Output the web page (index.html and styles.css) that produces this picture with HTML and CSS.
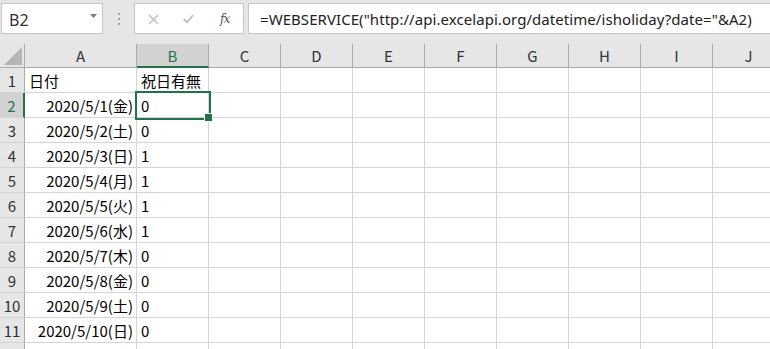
FILE: index.html
```html
<!DOCTYPE html>
<html lang="ja">
<head>
<meta charset="utf-8">
<link rel="stylesheet" href="styles.css">
</head>
<body>
<div class="app">
  <div class="toolbar">
    <div class="namebox">
      <span class="name">B2</span>
      <svg class="caret" width="7" height="4" viewBox="0 0 7 4"><path d="M0 0H7L3.5 4Z" fill="#7a7a7a"/></svg>
    </div>
    <div class="dots"><i></i><i></i><i></i></div>
    <div class="fxbox">
      <svg class="btn-x" width="11" height="11" viewBox="0 0 11 11"><path d="M1 1L10 10M10 1L1 10" stroke="#bdbdbd" stroke-width="1.4" fill="none"/></svg>
      <svg class="btn-ok" width="11" height="10" viewBox="0 0 11 10"><path d="M0.8 5.2L4 8.4L10.2 1" stroke="#bdbdbd" stroke-width="1.8" fill="none"/></svg>
      <span class="fx">fx</span>
    </div>
    <div class="formula">=WEBSERVICE("http://api.excelapi.org/datetime/isholiday?date="&amp;A2)</div>
  </div>
  <div class="sheet">
    <div class="corner"><svg width="18" height="18" viewBox="0 0 18 18"><path d="M18 0V18H0Z" fill="#b6b6b6"/></svg></div>
    <div class="ch">A</div><div class="ch on">B</div><div class="ch">C</div><div class="ch">D</div><div class="ch">E</div><div class="ch">F</div><div class="ch">G</div><div class="ch">H</div><div class="ch">I</div><div class="ch">J</div>

    <div class="rh">1</div><div class="c">日付</div><div class="c">祝日有無</div><div class="c"></div><div class="c"></div><div class="c"></div><div class="c"></div><div class="c"></div><div class="c"></div><div class="c"></div><div class="c"></div>
    <div class="rh on">2</div><div class="c r">2020/5/1(金)</div><div class="c sel">0</div><div class="c"></div><div class="c"></div><div class="c"></div><div class="c"></div><div class="c"></div><div class="c"></div><div class="c"></div><div class="c"></div>
    <div class="rh">3</div><div class="c r">2020/5/2(土)</div><div class="c">0</div><div class="c"></div><div class="c"></div><div class="c"></div><div class="c"></div><div class="c"></div><div class="c"></div><div class="c"></div><div class="c"></div>
    <div class="rh">4</div><div class="c r">2020/5/3(日)</div><div class="c">1</div><div class="c"></div><div class="c"></div><div class="c"></div><div class="c"></div><div class="c"></div><div class="c"></div><div class="c"></div><div class="c"></div>
    <div class="rh">5</div><div class="c r">2020/5/4(月)</div><div class="c">1</div><div class="c"></div><div class="c"></div><div class="c"></div><div class="c"></div><div class="c"></div><div class="c"></div><div class="c"></div><div class="c"></div>
    <div class="rh">6</div><div class="c r">2020/5/5(火)</div><div class="c">1</div><div class="c"></div><div class="c"></div><div class="c"></div><div class="c"></div><div class="c"></div><div class="c"></div><div class="c"></div><div class="c"></div>
    <div class="rh">7</div><div class="c r">2020/5/6(水)</div><div class="c">1</div><div class="c"></div><div class="c"></div><div class="c"></div><div class="c"></div><div class="c"></div><div class="c"></div><div class="c"></div><div class="c"></div>
    <div class="rh">8</div><div class="c r">2020/5/7(木)</div><div class="c">0</div><div class="c"></div><div class="c"></div><div class="c"></div><div class="c"></div><div class="c"></div><div class="c"></div><div class="c"></div><div class="c"></div>
    <div class="rh">9</div><div class="c r">2020/5/8(金)</div><div class="c">0</div><div class="c"></div><div class="c"></div><div class="c"></div><div class="c"></div><div class="c"></div><div class="c"></div><div class="c"></div><div class="c"></div>
    <div class="rh">10</div><div class="c r">2020/5/9(土)</div><div class="c">0</div><div class="c"></div><div class="c"></div><div class="c"></div><div class="c"></div><div class="c"></div><div class="c"></div><div class="c"></div><div class="c"></div>
    <div class="rh">11</div><div class="c r">2020/5/10(日)</div><div class="c">0</div><div class="c"></div><div class="c"></div><div class="c"></div><div class="c"></div><div class="c"></div><div class="c"></div><div class="c"></div><div class="c"></div>
    <div class="rh"></div><div class="c"></div><div class="c"></div><div class="c"></div><div class="c"></div><div class="c"></div><div class="c"></div><div class="c"></div><div class="c"></div><div class="c"></div><div class="c"></div>
  </div>
</div>
</body>
</html>
```

FILE: styles.css
```css
* { box-sizing: border-box; }
html, body { margin: 0; padding: 0; }
body {
  width: 770px;
  height: 349px;
  overflow: hidden;
  background: #fff;
  font-family: "Noto Sans CJK JP", "Noto Sans", sans-serif;
  color: #000;
}
.app { width: 770px; }

.toolbar {
  height: 44px;
  background: #e6e6e6;
  display: flex;
  align-items: flex-start;
  padding: 3px 0 0 1px;
}
.namebox {
  width: 102px;
  height: 31px;
  background: #fff;
  border: 1px solid #c6c6c6;
  display: flex;
  align-items: center;
  padding: 0 0 0 7px;
  font-family: "Noto Sans", sans-serif;
  font-size: 16px;
  color: #333;
}
.name { flex: 1; padding-top: 3px; }
.caret { margin: 0 5px 6px 0; }
.dots {
  margin: 10px 0 0 15px;
  display: flex;
  flex-direction: column;
  gap: 3px;
}
.dots i { display: block; width: 2px; height: 2px; background: #a0a0a0; }
.fxbox {
  margin-left: 14px;
  width: 110px;
  height: 31px;
  background: #fff;
  border: 1px solid #c6c6c6;
  display: flex;
  align-items: center;
  padding-left: 13px;
}
.btn-x { margin-top: 1px; }
.btn-ok { margin-left: 24px; margin-top: 1px; }
.fx {
  margin-left: 26px;
  font-family: "DejaVu Serif", "Liberation Serif", serif;
  font-style: italic;
  font-size: 12px;
  color: #555;
  letter-spacing: -1px;
}
.formula {
  margin-left: 4px;
  flex: 1;
  margin-right: -4px;
  height: 31px;
  background: #fff;
  border: 1px solid #c6c6c6;
  padding: 4px 0 0 11px;
  font-family: "Noto Sans", sans-serif;
  font-size: 15px;
  letter-spacing: 0.06px;
  line-height: 22px;
  color: #222;
  white-space: nowrap;
  overflow: hidden;
}

.sheet {
  display: grid;
  grid-template-columns: 25px 112px repeat(9, 72px);
  grid-template-rows: 24px repeat(12, 25px);
  background: #e6e6e6;
}
.corner {
  background: #e6e6e6;
  border-right: 1px solid #ababab;
  border-bottom: 1px solid #ababab;
  display: flex;
  align-items: flex-end;
  justify-content: flex-end;
  padding: 0 2px 2px 0;
}
.ch {
  background: #e6e6e6;
  border-right: 1px solid #ababab;
  border-bottom: 1px solid #ababab;
  display: flex;
  align-items: center;
  justify-content: center;
  font-size: 15px;
  color: #333;
}
.ch.on {
  background: #d2d2d2;
  border-bottom: 2px solid #217346;
  color: #217346;
}
.rh {
  background: #e6e6e6;
  border-right: 1px solid #ababab;
  border-bottom: 1px solid #d4d4d4;
  display: flex;
  align-items: center;
  justify-content: center;
  font-size: 15px;
  color: #333;
}
.rh.on {
  background: #d2d2d2;
  border-right: 2px solid #217346;
  color: #217346;
}
.c {
  background: #fff;
  border-right: 1px solid #d4d4d4;
  border-bottom: 1px solid #d4d4d4;
  display: flex;
  align-items: center;
  padding: 0 3px 0 4px;
  font-size: 15px;
  white-space: nowrap;
}
.c.r { justify-content: flex-end; }
.c.sel {
  position: relative;
  outline: 2px solid #217346;
}
.c.sel::after {
  content: "";
  position: absolute;
  right: -5px;
  bottom: -5px;
  width: 7px;
  height: 7px;
  background: #217346;
  border: 1px solid #fff;
  z-index: 2;
}
```
